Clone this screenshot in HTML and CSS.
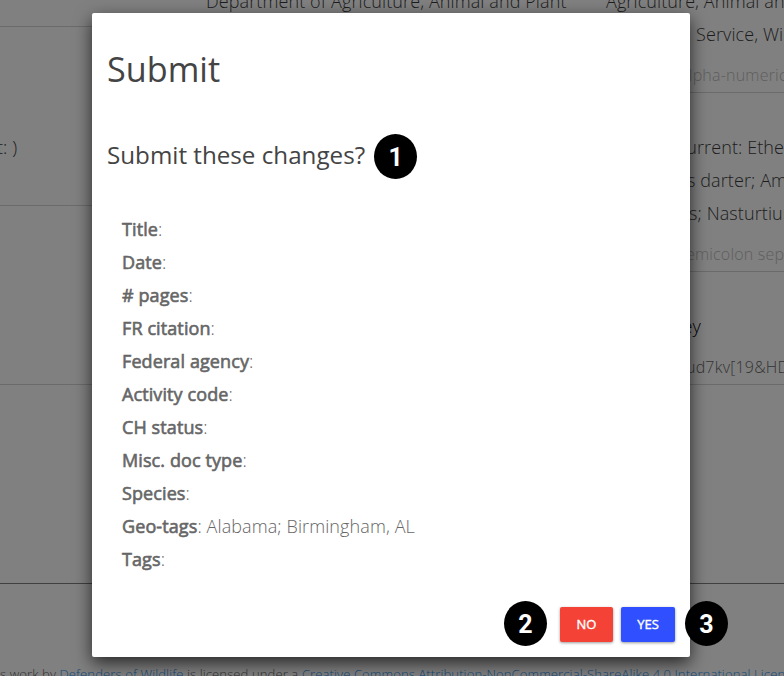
FILE: index.html
```html
<!DOCTYPE html>
<html lang="en">
<head>
<meta charset="utf-8">
<title>Submit</title>
<link rel="stylesheet" href="styles.css">
</head>
<body>
<main class="page">
  <div class="columns">
    <section class="column left">
      <div class="field first"></div>
      <div class="field"><p class="line current">t: )</p></div>
      <div class="field"></div>
    </section>
    <section class="column">
      <p class="line top">Department of Agriculture, Animal and Plant</p>
    </section>
    <section class="column right">
      <div class="field agency"><p class="line top">Agriculture, Animal and</p><p class="line service">Service, Wildlife</p><p class="hint alpha">Alpha-numeric</p></div>
      <div class="field species"><p class="line ethe">Current: Etheostoma</p><p class="line darter">s darter; Ambrosia</p><p class="line nast">s; Nasturtium</p><p class="hint semi">Semicolon separated</p></div>
      <div class="field key"><p class="line keyname">Key</p><p class="hint value">ud7kv[19&amp;HD</p></div>
    </section>
  </div>
  <footer class="footer">s work by <a>Defenders of Wildlife</a> is licensed under a <a>Creative Commons Attribution-NonCommercial-ShareAlike 4.0 International License</a></footer>
</main>
<div class="dialog" role="dialog">
  <h1>Submit</h1>
  <div class="question"><h2>Submit these changes?</h2><span class="badge">1</span></div>
  <div class="changes">
    <div><b>Title</b>:</div>
    <div><b>Date</b>:</div>
    <div><b># pages</b>:</div>
    <div><b>FR citation</b>:</div>
    <div><b>Federal agency</b>:</div>
    <div><b>Activity code</b>:</div>
    <div><b>CH status</b>:</div>
    <div><b>Misc. doc type</b>:</div>
    <div><b>Species</b>:</div>
    <div><b>Geo-tags</b>: Alabama; Birmingham, AL</div>
    <div><b>Tags</b>:</div>
  </div>
  <div class="actions">
    <span class="badge">2</span>
    <button class="no">NO</button>
    <button class="yes">YES</button>
    <span class="badge outside">3</span>
  </div>
</div>
</body>
</html>
```
FILE: styles.css
```css
* { box-sizing: border-box; }
body { margin: 0; width: 784px; height: 676px; overflow: hidden; background: #808080; font-family: "Open Sans", sans-serif; font-weight: 300; font-size: 18px; color: #1c1c1c; }
p, h1, h2 { margin: 0; }
.page { height: 676px; overflow: hidden; }
.columns { display: grid; grid-template-columns: repeat(3, 400px); margin-left: -194px; height: 583px; }
.column { white-space: nowrap; }
.line { line-height: 33px; height: 33px; letter-spacing: .1px; }
.top { margin-top: -15px; }
.field { border-bottom: 1px solid #6b6b6b; height: 179px; }
.first { height: 27px; }
.left .field { margin-right: 20px; }
.current { padding: 104px 0 0 191px; }
.agency { height: 93px; display: flow-root; }
.species { padding-top: 38px; }
.key { height: 113px; padding-top: 38px; }
.hint { font-size: 16px; line-height: 24px; margin-top: 12px; color: #5e5e5e; letter-spacing: .2px; }
.service { padding-left: 90px; }
.alpha { padding-left: 73px; }
.ethe { padding-left: 69px; }
.darter { padding-left: 81px; }
.nast { padding-left: 83px; }
.semi { padding-left: 71px; }
.keyname { padding-left: 66px; color: #000; }
.value { padding-left: 80px; color: #333; }
.footer { border-top: 1px solid #404040; padding-top: 81px; font-size: 13.1px; letter-spacing: .08px; line-height: 18px; white-space: nowrap; color: #303030; }
.footer a { color: #124a7a; }
.dialog { position: absolute; left: 92px; top: 13px; width: 598px; height: 644px; background: #fff; border-radius: 2px; box-shadow: 0 6px 17px rgba(0,0,0,.7); padding: 31px 15px 11px; display: flex; flex-direction: column; color: #666; }
h1 { font-size: 34.2px; line-height: 50px; font-weight: 400; color: #444; }
.question { display: flex; align-items: center; height: 45px; margin-top: 40px; gap: 9px; }
h2 { font-size: 24.2px; line-height: 34px; font-weight: 400; color: #444; margin-top: -4px; white-space: nowrap; }
.badge { width: 43px; height: 45px; flex: none; border-radius: 50%; background: #000; color: #fff; display: flex; align-items: center; justify-content: center; padding-top: 1px; font: bold 25px/1 Roboto, sans-serif; }
.changes { margin-top: 34px; padding-left: 15px; line-height: 33px; letter-spacing: .1px; }
.changes b { font-weight: 400; -webkit-text-stroke: .6px #666; }
.actions { display: flex; align-items: center; justify-content: flex-end; height: 45px; margin-top: auto; position: relative; }
button { position: relative; top: 1px; border: 0; border-radius: 2px; height: 35px; padding: 0 0 2px; font: 400 13px "Open Sans", sans-serif; -webkit-text-stroke: .4px #fff; color: #fff; box-shadow: 0 1px 3px rgba(0,0,0,.4); }
.no { width: 53px; background: #f44336; margin: 0 8px 0 13px; }
.yes { width: 54px; background: #304ffe; }
.outside { position: absolute; left: 578px; top: 0; }
```
